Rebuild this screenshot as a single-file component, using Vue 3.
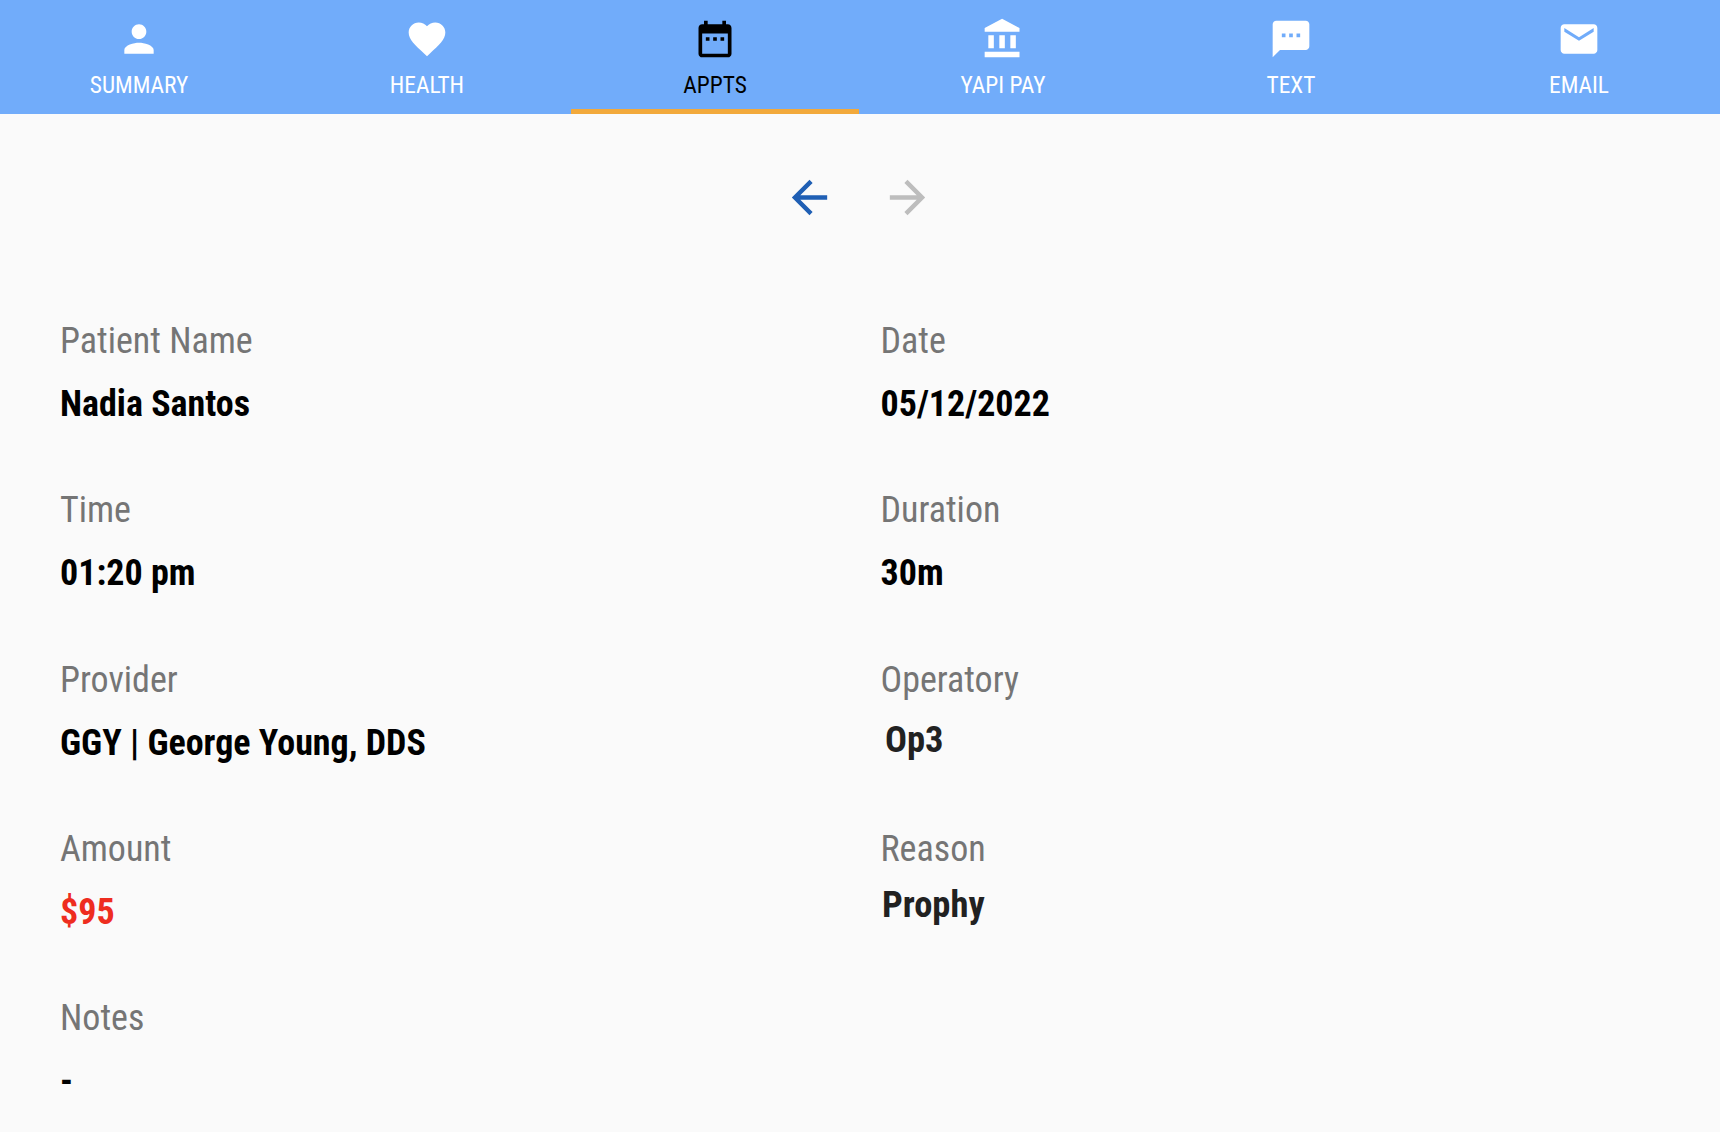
<script setup>
const tabs = [
  { label: 'SUMMARY', d: 'M12 12c2.21 0 4-1.79 4-4s-1.79-4-4-4-4 1.79-4 4 1.79 4 4 4zm0 2c-2.67 0-8 1.34-8 4v2h16v-2c0-2.66-5.33-4-8-4z' },
  { label: 'HEALTH', d: 'M12 21.35l-1.45-1.32C5.4 15.36 2 12.28 2 8.5 2 5.42 4.42 3 7.5 3c1.74 0 3.41.81 4.5 2.09C13.09 3.81 14.76 3 16.5 3 19.58 3 22 5.42 22 8.5c0 3.78-3.4 6.86-8.55 11.54L12 21.35z' },
  { label: 'APPTS', active: true, d: 'M9 11H7v2h2v-2zm4 0h-2v2h2v-2zm4 0h-2v2h2v-2zm2-7h-1V2h-2v2H8V2H6v2H5c-1.11 0-1.99.9-1.99 2L3 20c0 1.1.89 2 2 2h14c1.1 0 2-.9 2-2V6c0-1.1-.9-2-2-2zm0 16H5V9h14v11z' },
  { label: 'YAPI PAY', d: 'M4 10v7h3v-7H4zm6 0v7h3v-7h-3zM2 22h19v-3H2v3zm14-12v7h3v-7h-3zm-4.5-9L2 6v2h19V6l-9.5-5z' },
  { label: 'TEXT', d: 'M20 2H4c-1.1 0-1.99.9-1.99 2L2 22l4-4h14c1.1 0 2-.9 2-2V4c0-1.1-.9-2-2-2zM9 11H7V9h2v2zm4 0h-2V9h2v2zm4 0h-2V9h2v2z' },
  { label: 'EMAIL', d: 'M20 4H4c-1.1 0-1.99.9-1.99 2L2 18c0 1.1.9 2 2 2h16c1.1 0 2-.9 2-2V6c0-1.1-.9-2-2-2zm0 4l-8 5-8-5V6l8 5 8-5v2z' }
]
const fields = [
  { label: 'Patient Name', value: 'Nadia Santos' },
  { label: 'Date', value: '05/12/2022' },
  { label: 'Time', value: '01:20 pm' },
  { label: 'Duration', value: '30m' },
  { label: 'Provider', value: 'GGY | George Young, DDS' },
  { label: 'Operatory', value: 'Op3', kind: 'op' },
  { label: 'Amount', value: '$95', kind: 'money' },
  { label: 'Reason', value: 'Prophy', kind: 'reason' },
  { label: 'Notes', value: '-' }
]
</script>

<template>
  <div class="page">
    <nav class="tabs">
      <div v-for="t in tabs" :key="t.label" class="tab" :class="{ active: t.active }">
        <svg class="tab-icon" viewBox="0 0 24 24"><path :d="t.d" fill="currentColor" /></svg>
        <span class="tab-label">{{ t.label }}</span>
      </div>
    </nav>
    <div class="pager">
      <svg class="arrow back" viewBox="0 0 24 24"><path d="M20 11H7.83l5.59-5.59L12 4l-8 8 8 8 1.41-1.41L7.83 13H20v-2z" fill="currentColor" /></svg>
      <svg class="arrow next" viewBox="0 0 24 24"><path d="M12 4l-1.41 1.41L16.17 11H4v2h12.17l-5.58 5.59L12 20l8-8z" fill="currentColor" /></svg>
    </div>
    <div class="fields">
      <div v-for="f in fields" :key="f.label" class="field">
        <div class="label">{{ f.label }}</div>
        <div class="value" :class="f.kind">{{ f.value }}</div>
      </div>
    </div>
  </div>
</template>

<style>
html, body { margin: 0; background: #fafafa; }
</style>

<style scoped>
.page {
  width: 1720px;
  height: 1132px;
  overflow: hidden;
  background: #fafafa;
  font-family: "Roboto Condensed", Roboto, sans-serif;
  font-stretch: 75%;
}
.tabs {
  display: flex;
  height: 114px;
  margin-left: -5px;
  width: 1728px;
  background: #71acfa;
}
.tab {
  flex: 0 0 288px;
  box-sizing: border-box;
  height: 114px;
  padding-top: 17px;
  display: flex;
  flex-direction: column;
  align-items: center;
  color: #fff;
}
.tab.active {
  color: #000;
  border-bottom: 5px solid #f2a93b;
}
.tab-icon {
  width: 44px;
  height: 44px;
  display: block;
}
.tab-label {
  margin-top: 10px;
  font-size: 23.4px;
  line-height: 28px;
}
.pager {
  display: flex;
  justify-content: center;
  gap: 45px;
  padding: 57px 3px 0 0;
}
.arrow {
  width: 53px;
  height: 53px;
  display: block;
}
.back { color: #1f5fb4; }
.next { color: #bdbdbd; }
.fields {
  display: grid;
  grid-template-columns: 820.5px 1fr;
  grid-auto-rows: 169.25px;
  padding: 96px 0 0 60px;
}
.label {
  font-size: 36px;
  line-height: 42px;
  color: #757575;
}
.value {
  margin-top: 21px;
  font-size: 36px;
  line-height: 42px;
  font-weight: 700;
  color: #000;
}
.money { color: #ee2d1f; }
.op {
  margin: 18px 0 0 4.5px;
  font-size: 36.5px;
  color: #212121;
}
.reason {
  margin: 14px 0 0 1.5px;
  font-size: 36.5px;
  color: #212121;
}
</style>
